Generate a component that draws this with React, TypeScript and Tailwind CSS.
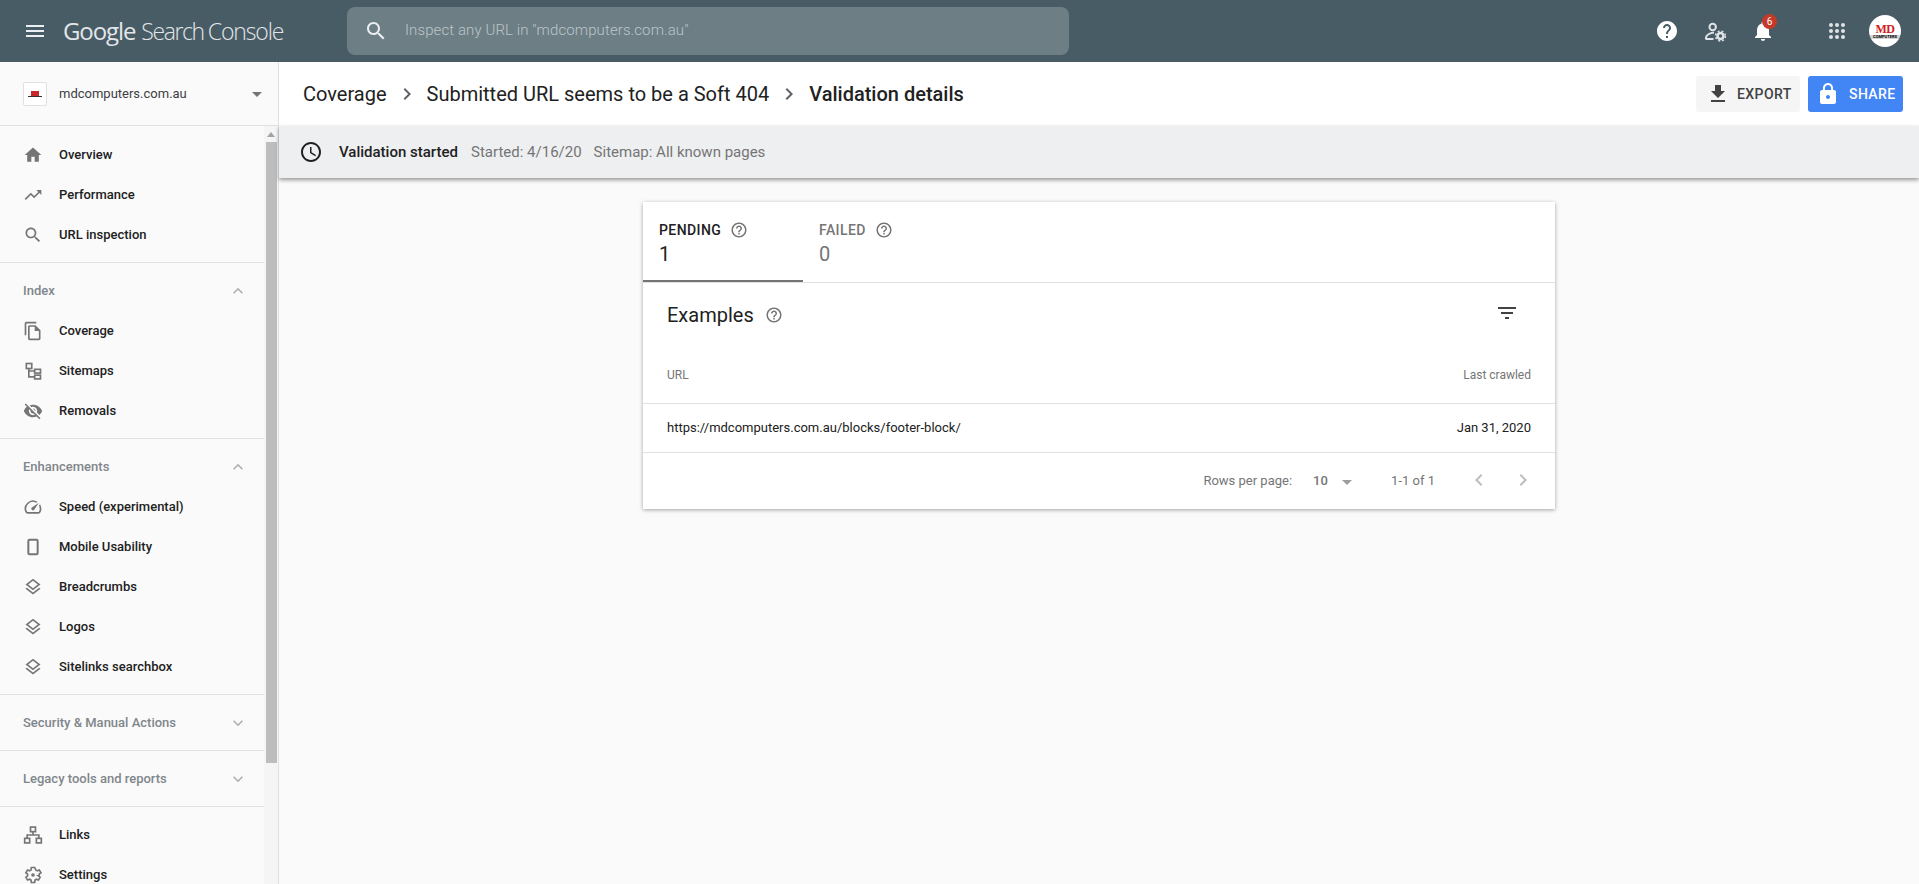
const P = {
  home: 'M10 20v-6h4v6h5v-8h3L12 3 2 12h3v8z',
  trend: 'M16 6l2.29 2.29-4.88 4.88-4-4L2 16.59 3.41 18l6-6 4 4 6.3-6.29L22 12V6z',
  search: 'M15.5 14h-.79l-.28-.27C15.41 12.59 16 11.11 16 9.5 16 5.91 13.09 3 9.5 3S3 5.91 3 9.5 5.91 16 9.5 16c1.61 0 3.09-.59 4.23-1.57l.27.28v.79l5 4.99L20.49 19l-4.99-5zm-6 0C7.01 14 5 11.99 5 9.5S7.01 5 9.5 5 14 7.01 14 9.5 11.99 14 9.5 14z',
  copy: 'M16 1H4c-1.1 0-2 .9-2 2v14h2V3h12V1zm-1 4H8c-1.1 0-1.99.9-1.99 2L6 21c0 1.1.89 2 1.99 2H19c1.1 0 2-.9 2-2V11l-6-6zM8 21V7h6v5h5v9H8z',
  eyeOff: 'M12 7c2.76 0 5 2.24 5 5 0 .65-.13 1.26-.36 1.83l2.92 2.92c1.51-1.26 2.7-2.89 3.43-4.75-1.73-4.39-6-7.5-11-7.5-1.4 0-2.74.25-3.98.7l2.16 2.16C10.74 7.13 11.35 7 12 7zM2 4.27l2.28 2.28.46.46C3.08 8.3 1.78 10.02 1 12c1.73 4.39 6 7.5 11 7.5 1.55 0 3.03-.3 4.38-.84l.42.42L19.73 22 21 20.73 3.27 3 2 4.27zM7.53 9.8l1.55 1.55c-.05.21-.08.43-.08.65 0 1.66 1.34 3 3 3 .22 0 .44-.03.65-.08l1.55 1.55c-.67.33-1.41.53-2.2.53-2.76 0-5-2.24-5-5 0-.79.2-1.53.53-2.2zm4.31-.78l3.15 3.15.02-.16c0-1.66-1.34-3-3-3l-.17.01z',
  speed: 'M20.38 8.57l-1.23 1.85a8 8 0 0 1-.22 7.58H5.07A8 8 0 0 1 15.58 6.85l1.85-1.23A10 10 0 0 0 3.35 19a2 2 0 0 0 1.72 1h13.85a2 2 0 0 0 1.74-1 10 10 0 0 0-.27-10.44zm-9.79 6.84a2 2 0 0 0 2.83 0l5.66-8.49-8.49 5.66a2 2 0 0 0 0 2.83z',
  layers: 'M11.99 18.54l-7.37-5.73L3 14.07l9 7 9-7-1.63-1.27-7.38 5.74zM12 16l7.36-5.73L21 9l-9-7-9 7 1.63 1.27L12 16zm0-11.47L17.74 9 12 13.47 6.26 9 12 4.53z',
  help: 'M12 2C6.48 2 2 6.48 2 12s4.48 10 10 10 10-4.48 10-10S17.52 2 12 2zm1 17h-2v-2h2v2zm2.07-7.75l-.9.92C13.45 12.9 13 13.5 13 15h-2v-.5c0-1.1.45-2.1 1.17-2.83l1.24-1.26c.37-.36.59-.86.59-1.41 0-1.1-.9-2-2-2s-2 .9-2 2H8c0-2.21 1.79-4 4-4s4 1.79 4 4c0 .88-.36 1.68-.93 2.25z',
  helpOutline: 'M11 18h2v-2h-2v2zm1-16C6.48 2 2 6.48 2 12s4.48 10 10 10 10-4.48 10-10S17.52 2 12 2zm0 18c-4.41 0-8-3.59-8-8s3.59-8 8-8 8 3.59 8 8-3.59 8-8 8zm0-14c-2.21 0-4 1.79-4 4h2c0-1.1.9-2 2-2s2 .9 2 2c0 2-3 1.75-3 5h2c0-2.25 3-2.5 3-5 0-2.21-1.79-4-4-4z',
  bell: 'M12 22c1.1 0 2-.9 2-2h-4c0 1.1.89 2 2 2zm6-6v-5c0-3.07-1.64-5.64-4.5-6.32V4c0-.83-.67-1.5-1.5-1.5s-1.5.67-1.5 1.5v.68C7.63 5.36 6 7.92 6 11v5l-2 2v1h16v-1l-2-2z',
  download: 'M19 9h-4V3H9v6H5l7 7 7-7zM5 18v2h14v-2H5z',
  lock: 'M18 8h-1V6c0-2.76-2.24-5-5-5S7 3.24 7 6v2H6c-1.1 0-2 .9-2 2v10c0 1.1.9 2 2 2h12c1.1 0 2-.9 2-2V10c0-1.1-.9-2-2-2zm-6 9c-1.1 0-2-.9-2-2s.9-2 2-2 2 .9 2 2-.9 2-2 2zm3.1-9H8.9V6c0-1.71 1.39-3.1 3.1-3.1 1.71 0 3.1 1.39 3.1 3.1v2z',
  filter: 'M10 18h4v-2h-4v2zM3 6v2h18V6H3zm3 7h12v-2H6v2z',
  menu: 'M3 18h18v-2H3v2zm0-5h18v-2H3v2zm0-7v2h18V6H3z',
  clock: 'M11.99 2C6.47 2 2 6.48 2 12s4.47 10 9.99 10C17.52 22 22 17.52 22 12S17.52 2 11.99 2zM12 20c-4.42 0-8-3.58-8-8s3.58-8 8-8 8 3.58 8 8-3.58 8-8 8zm.5-13H11v6l5.25 3.15.75-1.23-4.5-2.67z',
  up: 'M7.41 15.41L12 10.83l4.59 4.58L18 14l-6-6-6 6z',
  down: 'M7.41 8.59L12 13.17l4.59-4.58L18 10l-6 6-6-6z',
  left: 'M15.41 7.41L14 6l-6 6 6 6 1.41-1.41L10.83 12z',
  right: 'M10 6L8.59 7.41 13.17 12l-4.58 4.59L10 18l6-6z',
  caret: 'M7 10l5 5 5-5z',
};

function Icon({ d, className }: { d: string; className: string }) {
  return (
    <svg viewBox="0 0 24 24" fill="currentColor" className={className} aria-hidden="true">
      <path d={d} />
    </svg>
  );
}

const navIcon = 'w-5 h-5 text-[#757575]';

function GearIcon() {
  return (
    <svg viewBox="0 0 24 24" fill="none" stroke="currentColor" strokeWidth={2} className={navIcon}>
      <path d="M19.43 12.98c.04-.32.07-.64.07-.98s-.03-.66-.07-.98l2.11-1.65-2-3.46-2.49 1c-.52-.4-1.08-.73-1.69-.98L13.98 3h-3.96l-.38 2.93c-.61.25-1.17.59-1.69.98l-2.49-1-2 3.46 2.11 1.65c-.04.32-.07.65-.07.98s.03.66.07.98l-2.11 1.65 2 3.46 2.49-1c.52.4 1.08.73 1.69.98l.38 2.93h3.96l.38-2.93c.61-.25 1.17-.59 1.69-.98l2.49 1 2-3.46-2.11-1.65z" />
      <circle cx="12" cy="12" r="2.2" fill="currentColor" stroke="none" />
    </svg>
  );
}

function SitemapIcon() {
  return (
    <svg viewBox="0 0 24 24" fill="none" stroke="currentColor" strokeWidth={2} className={navIcon}>
      <rect x="4" y="3" width="6.5" height="6" />
      <rect x="14" y="10" width="7" height="4.5" />
      <rect x="14" y="17" width="7" height="4.5" />
      <path d="M7 9v10h7M7 12h7" />
    </svg>
  );
}

function PhoneIcon() {
  return (
    <svg viewBox="0 0 24 24" fill="none" stroke="currentColor" strokeWidth={2.4} className={navIcon}>
      <rect x="6.4" y="3.4" width="11.2" height="17.2" rx="1.5" />
    </svg>
  );
}

function LinksIcon() {
  return (
    <svg viewBox="0 0 24 24" fill="none" stroke="currentColor" strokeWidth={2} className={navIcon}>
      <rect x="9" y="2.5" width="6" height="5.5" />
      <rect x="2" y="16" width="6" height="5.5" />
      <rect x="16" y="16" width="6" height="5.5" />
      <path d="M12 8v4M5 16v-4h14v4" />
    </svg>
  );
}

function NavItem({ icon, label }: { icon: React.ReactNode; label: string }) {
  return (
    <div className="flex items-center h-10 shrink-0 pl-[23px] pt-[2px]">
      <span className="w-9 flex shrink-0">{icon}</span>
      <span className="text-[13px] font-medium text-[#212121]">{label}</span>
    </div>
  );
}

function SectionHead({ label, open }: { label: string; open: boolean }) {
  return (
    <div className="flex items-center justify-between h-[55px] shrink-0 pl-[23px] pr-4">
      <span className="text-[13px] font-medium text-[#80868b]">{label}</span>
      <Icon d={open ? P.up : P.down} className="w-5 h-5 text-[#b0b0b0]" />
    </div>
  );
}

function Sidebar() {
  return (
    <aside className="w-[279px] shrink-0 flex flex-col bg-[#fafafa] border-r border-[#e0e0e0]">
      <div className="h-16 shrink-0 flex items-center pl-[23px] pr-[9px] border-b border-[#e0e0e0]">
        <span className="w-6 h-6 mr-3 bg-white border border-[#e0e0e0] rounded-[2px] flex flex-col items-center justify-center shrink-0">
          <span className="w-2 h-[5px] bg-[#c62828]" />
          <span className="w-3.5 h-px bg-[#333]" />
        </span>
        <span className="text-[13px] text-[#3c4043] flex-1">mdcomputers.com.au</span>
        <Icon d={P.caret} className="w-6 h-6 text-[#757575]" />
      </div>
      <div className="flex-1 min-h-0 flex">
        <nav className="w-[264px] shrink-0 overflow-hidden flex flex-col">
          <div className="py-2 border-b border-[#e0e0e0] flex flex-col shrink-0">
            <NavItem icon={<Icon d={P.home} className={navIcon} />} label="Overview" />
            <NavItem icon={<Icon d={P.trend} className={navIcon} />} label="Performance" />
            <NavItem icon={<Icon d={P.search} className={navIcon} />} label="URL inspection" />
          </div>
          <div className="pb-2 border-b border-[#e0e0e0] flex flex-col shrink-0">
            <SectionHead label="Index" open />
            <div className="-mt-2 flex flex-col">
              <NavItem icon={<Icon d={P.copy} className={navIcon} />} label="Coverage" />
              <NavItem icon={<SitemapIcon />} label="Sitemaps" />
              <NavItem icon={<Icon d={P.eyeOff} className={navIcon} />} label="Removals" />
            </div>
          </div>
          <div className="pb-2 border-b border-[#e0e0e0] flex flex-col shrink-0">
            <SectionHead label="Enhancements" open />
            <div className="-mt-2 flex flex-col">
              <NavItem icon={<Icon d={P.speed} className={navIcon} />} label="Speed (experimental)" />
              <NavItem icon={<PhoneIcon />} label="Mobile Usability" />
              <NavItem icon={<Icon d={P.layers} className={navIcon} />} label="Breadcrumbs" />
              <NavItem icon={<Icon d={P.layers} className={navIcon} />} label="Logos" />
              <NavItem icon={<Icon d={P.layers} className={navIcon} />} label="Sitelinks searchbox" />
            </div>
          </div>
          <div className="border-b border-[#e0e0e0] shrink-0">
            <SectionHead label="Security & Manual Actions" open={false} />
          </div>
          <div className="border-b border-[#e0e0e0] shrink-0">
            <SectionHead label="Legacy tools and reports" open={false} />
          </div>
          <div className="pt-[7px] flex flex-col shrink-0">
            <NavItem icon={<LinksIcon />} label="Links" />
            <NavItem icon={<GearIcon />} label="Settings" />
          </div>
        </nav>
        <div className="flex-1 bg-[#f5f5f5] flex flex-col items-center">
          <div className="h-4 flex items-center justify-center">
            <span className="border-x-[4px] border-x-transparent border-b-[5px] border-b-[#a3a3a3]" />
          </div>
          <div className="w-[11px] h-[621px] bg-[#bdbdbd]" />
        </div>
      </div>
    </aside>
  );
}

function Header() {
  return (
    <header className="h-[62px] shrink-0 bg-[#485c66] flex items-center pl-[23px] pr-[18px] text-white">
      <Icon d={P.menu} className="w-6 h-6 text-[#eceff1] shrink-0" />
      <div className="ml-[16px] w-[284px] shrink-0 flex items-baseline text-[#e3e6e8] font-['Open_Sans',sans-serif] leading-none">
        <span className="mr-[6px] font-normal text-[24px] tracking-[-1.1px]">Google</span>
        <span className="mr-[4px] font-light text-[23px] tracking-[-1.4px]">Search</span>
        <span className="font-light text-[23px] tracking-[-1.1px]">Console</span>
      </div>
      <div className="w-[722px] h-12 rounded-lg bg-[#6d7e85] flex items-center pl-[17px] shrink-0">
        <Icon d={P.search} className="w-6 h-6 text-[#eceff1] shrink-0" />
        <span className="ml-[17px] -mt-[2px] text-[15px] tracking-[0.1px] font-light text-[#bcc5c9]">Inspect any URL in "mdcomputers.com.au"</span>
      </div>
      <div className="flex-1" />
      <Icon d={P.help} className="w-6 h-6 text-white" />
      <svg viewBox="0 0 24 24" fill="none" className="w-6 h-6 ml-6 text-[#e0e4e6]" stroke="currentColor" strokeWidth={2}>
        <circle cx="9.7" cy="8" r="3.2" />
        <path d="M3 20v-1.5c0-2.5 4-4.5 8-5" />
        <path d="M2.5 20h8" />
        <circle cx="17.5" cy="17" r="3" strokeWidth={2.6} />
        <circle cx="17.5" cy="17" r="5" strokeWidth={1.4} strokeDasharray="2 2" />
      </svg>
      <div className="relative ml-6 w-6 h-6">
        <Icon d={P.bell} className="w-6 h-6 text-white" />
        <span className="absolute -top-[5px] left-[11px] w-[15px] h-[15px] rounded-full bg-[#c53929] text-[10px] leading-[15px] text-center text-white">6</span>
      </div>
      <div className="ml-[50px] w-6 h-6 grid grid-cols-3 gap-[2.5px] p-1">
        {[0, 1, 2, 3, 4, 5, 6, 7, 8].map((i) => (
          <span key={i} className="rounded-full bg-[#dfe3e5]" />
        ))}
      </div>
      <div className="ml-5 w-8 h-8 rounded-full bg-white flex flex-col items-center justify-center overflow-hidden">
        <span className="text-[12px] leading-[12px] font-black tracking-[-0.5px] font-['Liberation_Serif',serif] text-[#d01c1f]">MD</span>
        <span className="w-full text-center text-[4px] leading-[4px] font-bold text-black bg-[#222]/20">COMPUTERS</span>
      </div>
    </header>
  );
}

function Card() {
  return (
    <div className="w-[912px] mx-auto mt-6 bg-white shadow-[0_1px_4px_rgba(0,0,0,0.35)] text-[#212121]">
      <div className="flex h-[81px] border-b border-[#e0e0e0]">
        <div className="w-40 pl-4 pt-[19px] border-b-2 border-[#757575] h-20">
          <div className="flex items-center h-[18px]">
            <span className="text-[14px] font-medium tracking-[0.4px]">PENDING</span>
            <Icon d={P.helpOutline} className="w-[18px] h-[18px] ml-[9px] text-[#757575]" />
          </div>
          <div className="text-[20px] leading-[24px] mt-[3px]">1</div>
        </div>
        <div className="w-40 pl-4 pt-[19px] text-[#757575]">
          <div className="flex items-center h-[18px]">
            <span className="text-[14px] font-medium tracking-[0.4px]">FAILED</span>
            <Icon d={P.helpOutline} className="w-[18px] h-[18px] ml-[9px]" />
          </div>
          <div className="text-[20px] leading-[24px] mt-[3px]">0</div>
        </div>
      </div>
      <div className="h-[66px] flex items-center pl-6 pr-[36px] pb-[2px]">
        <span className="text-[20px]">Examples</span>
        <Icon d={P.helpOutline} className="w-[18px] h-[18px] ml-[11px] text-[#757575]" />
        <div className="flex-1" />
        <Icon d={P.filter} className="w-6 h-6 text-[#424242] -mt-1" />
      </div>
      <div className="h-[55px] flex items-center justify-between px-6 pb-[2px] text-[12px] text-[#757575] border-b border-[#e0e0e0]">
        <span>URL</span>
        <span>Last crawled</span>
      </div>
      <div className="h-[49px] flex items-center justify-between px-6 text-[13px] border-b border-[#e0e0e0]">
        <span>https://mdcomputers.com.au/blocks/footer-block/</span>
        <span>Jan 31, 2020</span>
      </div>
      <div className="h-[56px] flex items-center justify-end pr-[20px] text-[13px] text-[#757575]">
        <span>Rows per page:</span>
        <span className="ml-[21px] font-medium w-[17px]">10</span>
        <Icon d={P.caret} className="w-6 h-6 ml-[5px] mt-[2px] text-[#9e9e9e]" />
        <span className="ml-8">1-1 of 1</span>
        <Icon d={P.left} className="w-6 h-6 ml-[32px] -mt-[3px] text-[#bdbdbd]" />
        <Icon d={P.right} className="w-6 h-6 ml-5 -mt-[3px] text-[#bdbdbd]" />
      </div>
    </div>
  );
}

export default function App() {
  return (
    <div className="h-[884px] w-full overflow-hidden flex flex-col font-['Roboto',sans-serif]">
      <Header />
      <div className="flex-1 min-h-0 flex">
        <Sidebar />
        <main className="flex-1 min-w-0 flex flex-col bg-[#fafafa]">
          <div className="h-16 shrink-0 bg-white flex items-center pl-6 pr-4 text-[20px] text-[#212121]">
            <span>Coverage</span>
            <Icon d={P.right} className="w-6 h-6 mx-2 text-[#5f6368]" />
            <span>Submitted URL seems to be a Soft 404</span>
            <Icon d={P.right} className="w-6 h-6 mx-2 text-[#5f6368]" />
            <span className="font-medium">Validation details</span>
            <div className="flex-1" />
            <button className="h-9 w-[104px] rounded-[3px] bg-[#f5f5f5] flex items-center pl-[10px] text-[14px] font-medium tracking-[0.4px] text-[#424242]">
              <Icon d={P.download} className="w-6 h-6 mr-[7px]" />
              EXPORT
            </button>
            <button className="h-9 w-[95px] ml-2 rounded-[3px] bg-[#4285f4] flex items-center pl-[8px] text-[14px] font-medium tracking-[0.4px] text-white">
              <Icon d={P.lock} className="w-6 h-6 mr-[9px]" />
              SHARE
            </button>
          </div>
          <div className="h-[52px] shrink-0 bg-[#eeeff1] shadow-[0_2px_4px_rgba(0,0,0,0.4)] flex items-center pl-[20px] text-[15px] text-[#757575]">
            <Icon d={P.clock} className="w-6 h-6 text-[#212121]" />
            <span className="ml-4 font-medium text-[#212121]">Validation started</span>
            <span className="ml-[13px]">Started: 4/16/20</span>
            <span className="ml-3">Sitemap: All known pages</span>
          </div>
          <Card />
        </main>
      </div>
    </div>
  );
}
